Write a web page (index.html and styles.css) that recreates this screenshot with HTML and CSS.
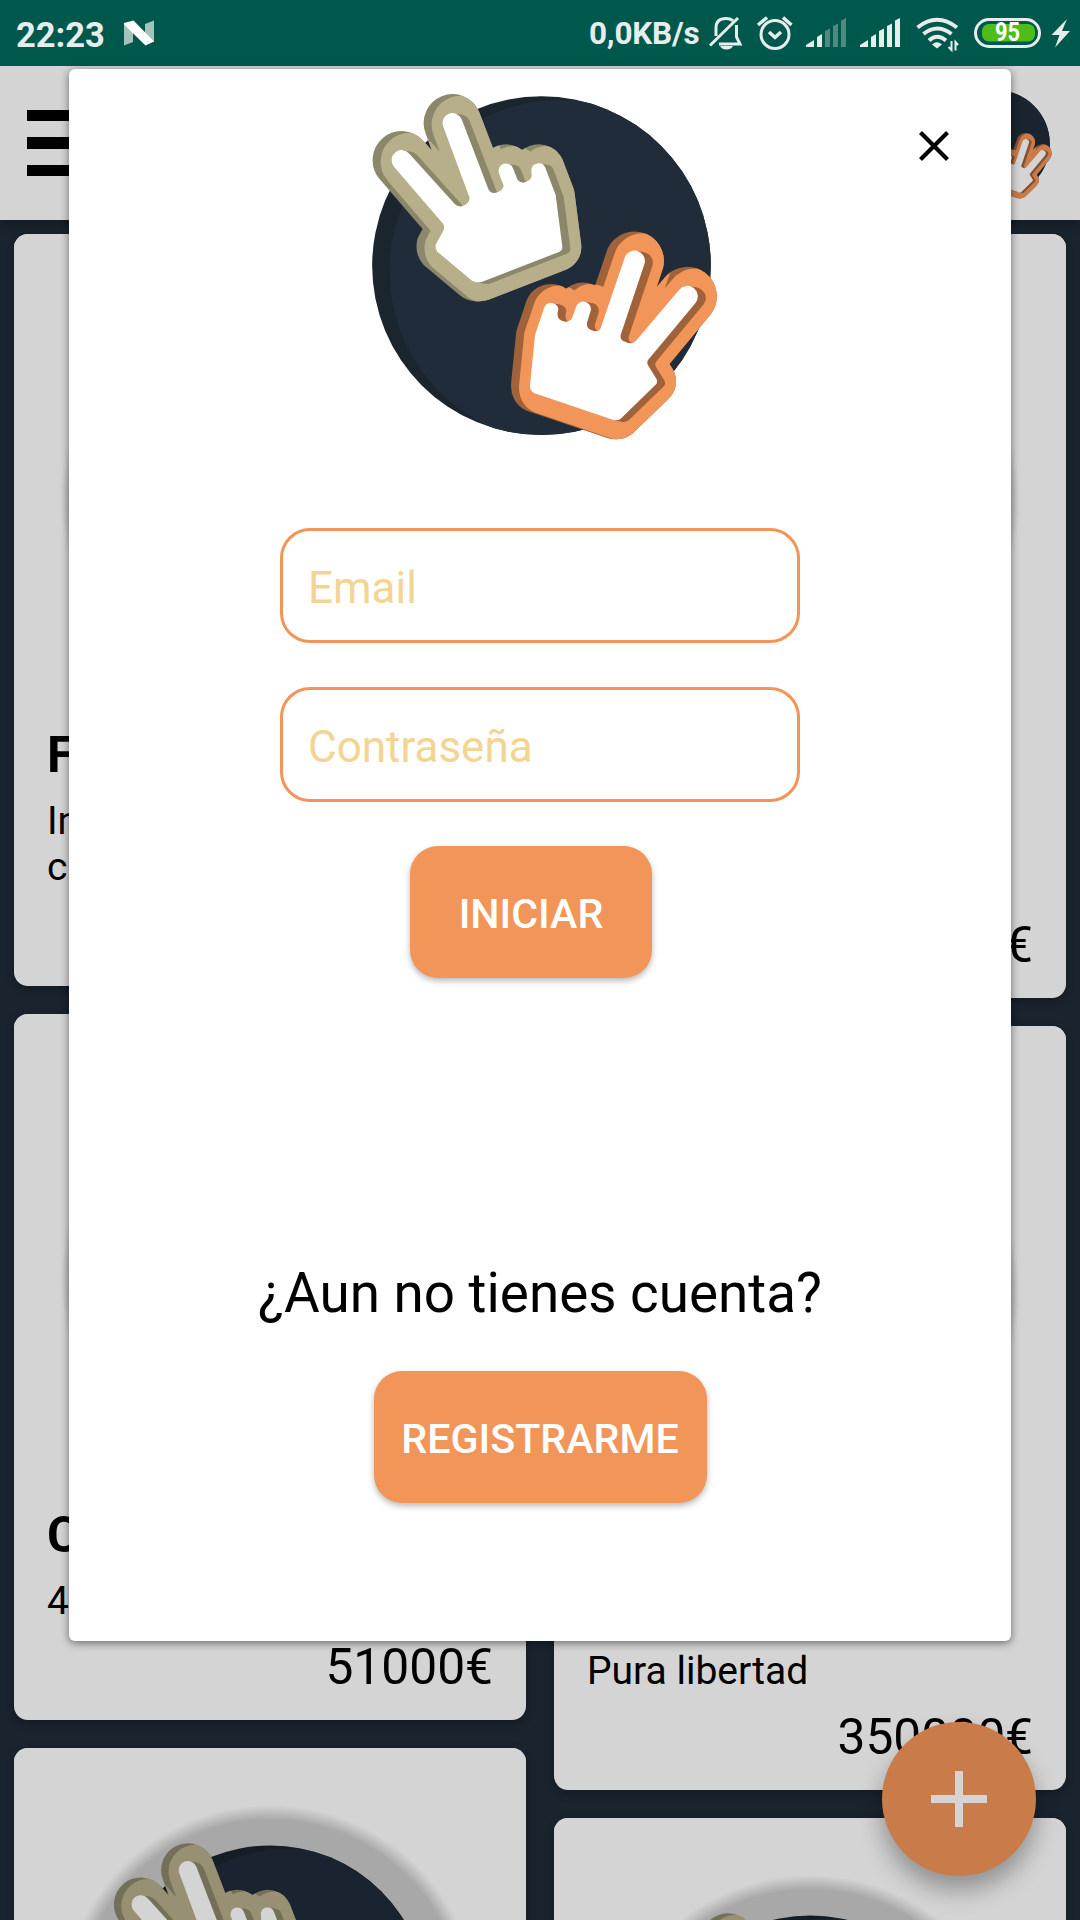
FILE: index.html
```html
<!DOCTYPE html>
<html lang="es">
<head>
<meta charset="utf-8">
<title>Iniciar sesión</title>
<link rel="stylesheet" href="styles.css">
</head>
<body>
<svg class="defs" width="0" height="0" aria-hidden="true">
  <defs>
    <path id="handA" d="M132 290A20 20 0 0 1 178 251L315 403Q323 411 335 409Q358 402 359 384L280 170A20 20 0 0 1 335 148L415 357Q421 370 434 369Q458 364 461 348L447 310A22 22 0 0 1 489 295L502 328Q508 338 520 338Q546 332 545 315L544 301A22 22 0 0 1 586 293L617 375L637 530Q638 540 627 546L395 636Q380 640 366 632L262 545Q255 537 257 524L281 480Q285 468 278 460Z"/>
    <path id="handB" d="M540 945L555 795L583 712A22 22 0 0 1 625 718Q619 740 628 748Q638 756 650 755Q664 752 667 742L678 712A22 22 0 0 1 722 722L711 758Q708 775 725 781Q745 789 752 775L823 566A31 31 0 0 1 884 580L812 795Q810 810 822 814Q845 827 858 812L987 660A30 30 0 0 1 1037 698L896 868Q889 876 894 886L920 928Q924 938 916 945L812 1046Q803 1053 790 1050L553 970Q539 964 540 945Z"/>
    <mask id="rimA" maskUnits="userSpaceOnUse" x="0" y="0" width="1170" height="1170"><use href="#handA" fill="#fff" stroke="#fff" stroke-width="114" stroke-linejoin="round"/></mask>
    <mask id="rimB" maskUnits="userSpaceOnUse" x="0" y="0" width="1170" height="1170"><use href="#handB" fill="#fff" stroke="#fff" stroke-width="114" stroke-linejoin="round"/></mask>
    <clipPath id="disc"><circle cx="574.5" cy="587" r="508"/></clipPath>
    <symbol id="logo" viewBox="0 0 1170 1170">
      <circle cx="574.5" cy="587" r="508" fill="#1a252d"/>
      <circle cx="631" cy="603" r="513" fill="#202c3a" clip-path="url(#disc)"/>
      <use href="#handA" fill="#8c866a" stroke="#8c866a" stroke-width="114" stroke-linejoin="round"/>
      <g mask="url(#rimA)"><use href="#handA" x="24" y="5" fill="#b7ae8a" stroke="#b7ae8a" stroke-width="114" stroke-linejoin="round"/></g>
      <g fill="#8c866a"><use href="#handA" x="8" y="2"/><use href="#handA" x="16" y="3"/><use href="#handA" x="24" y="5"/></g>
      <use href="#handA" fill="#fff"/>
      <use href="#handB" fill="#a0623a" stroke="#a0623a" stroke-width="114" stroke-linejoin="round"/>
      <g mask="url(#rimB)"><use href="#handB" x="24" y="5" fill="#f29558" stroke="#f29558" stroke-width="114" stroke-linejoin="round"/></g>
      <g fill="#a0623a"><use href="#handB" x="8" y="2"/><use href="#handB" x="16" y="3"/><use href="#handB" x="24" y="5"/></g>
      <use href="#handB" fill="#fff"/>
    </symbol>
  </defs>
</svg>

<div class="screen">
  <header class="status">
    <span class="clock">22:23</span>
    <svg class="nougat" width="30" height="26" viewBox="0 0 30 26"><path d="M0 3L9 7V22L0 25.500zM21 4L30 .5V22L21 17z" fill="#a3c4bd"/><path d="M0 3L9.500 .5L30 21.500L21.500 25.500L0 4.500z" fill="#fff"/></svg>
    <span class="rate">0,0KB/s</span>
    <svg class="indicators" width="370" height="66" viewBox="700 0 370 66" fill="none" stroke="#e5eeed" stroke-width="3">
      <path d="M710 45.500L738 18M716 36V28Q716 18.500 726 18.500Q730 18.500 733 20.500M736.500 25V37L740 44H719"/>
      <path d="M720 46H733Q731 49.500 726.500 49.500Q722 49.500 720 46z" fill="#e5eeed" stroke="none"/>
      <circle cx="775" cy="34.500" r="14"/><path d="M769 32L775 37.500L781 32M758 25L767 17.500M791.500 25L783 17.500" stroke-width="3.500"/>
      <g fill="#e5eeed" stroke="none"><path d="M806 47V45L814 40V47zM817 47V37L822 34V47z"/><path fill="#4f897f" d="M825 47V31L830 28.500V47zM833 47V26L838 23.500V47zM841 47V20.500L846 18V47z"/>
      <path d="M860 47V45L868 40V47zM871 47V37L876 34V47zM879 47V31L884 28.500V47zM887 47V26L892 23.500V47zM895 47V20.500L900 18V47z"/></g>
      <path d="M917.500 27.500Q937 12 957 27.500M923.500 34Q937 23 951.500 34M929 40.500Q937 33 946 40.500" stroke-width="4"/><path d="M932 44.500Q937 40 942 44.500L937 48.500z" fill="#e5eeed" stroke="none"/>
      <path d="M951.500 41V50L948.500 47M955.500 50.500V42L958 45" stroke-width="2"/>
      <rect x="975.500" y="19.500" width="64" height="27" rx="13.500"/><rect x="982" y="24" width="53" height="17.500" rx="7" fill="#4ebd1c" stroke="none"/>
      <path d="M1067 19L1051.500 35H1059.500L1055 47.500L1070 31H1062z" fill="#e5eeed" stroke="none"/>
      <text class="charge" x="995" y="41" textLength="25" lengthAdjust="spacingAndGlyphs">95</text>
    </svg>
  </header>

  <main class="app">
    <div class="appbar">
      <div class="burger"><i></i><i></i><i></i></div>
      <svg class="appbar-logo" viewBox="0 0 1170 1170"><use href="#logo"/></svg>
    </div>
    <div class="feed">
      <div class="column">
        <article class="card card-a"><div class="picture"><svg viewBox="0 0 1170 1170"><use href="#logo"/></svg></div><h2>F</h2><p>In<br>c</p></article>
        <article class="card card-b"><div class="picture"><svg viewBox="0 0 1170 1170"><use href="#logo"/></svg></div><h2>C</h2><p>4</p><b class="price">51000€</b></article>
        <article class="card card-c"><div class="picture"><svg viewBox="0 0 1170 1170"><use href="#logo"/></svg></div></article>
      </div>
      <div class="column">
        <article class="card card-d"><div class="picture"><svg viewBox="0 0 1170 1170"><use href="#logo"/></svg></div><b class="price">€</b></article>
        <article class="card card-d"><div class="picture"><svg viewBox="0 0 1170 1170"><use href="#logo"/></svg></div><p class="end">Pura libertad</p><b class="price">350000€</b></article>
        <article class="card card-c"><div class="picture"><svg viewBox="0 0 1170 1170"><use href="#logo"/></svg></div></article>
      </div>
    </div>
    <div class="fab"><svg width="56" height="56" viewBox="0 0 56 56"><path d="M28 0V56M0 28H56" stroke="#fff" stroke-width="8"/></svg></div>
    <div class="scrim"></div>
  </main>

  <section class="dialog">
    <svg class="dialog-logo" viewBox="0 0 1170 1170"><use href="#logo"/></svg>
    <svg class="close" width="30" height="30" viewBox="0 0 30 30"><path d="M1.500 1.500L28.500 28.500M28.500 1.500L1.500 28.500" stroke="#000" stroke-width="4.200"/></svg>
    <div class="field">Email</div>
    <div class="field">Contraseña</div>
    <div class="button login">INICIAR</div>
    <div class="question">¿Aun no tienes cuenta?</div>
    <div class="button register">REGISTRARME</div>
  </section>
</div>
</body>
</html>
```
FILE: styles.css
```css
* { box-sizing: border-box; }
body { margin: 0; font-family: Roboto, "Liberation Sans", sans-serif; }
svg { display: block; flex: none; }
.defs { position: absolute; }
.screen { position: relative; width: 1080px; height: 1920px; overflow: hidden; display: flex; flex-direction: column; }

/* Status bar */
.status { height: 66px; flex: none; background: #00574b; color: #e5eeed; display: flex; align-items: center; padding-left: 16px; font-weight: 700; }
.clock { width: 108px; font-size: 34.5px; line-height: 44px; padding-top: 3px; }
.rate { margin-left: 435px; width: 111px; font-size: 31.5px; line-height: 44px; padding-top: 2px; letter-spacing: -.2px; white-space: nowrap; }
.charge { font-size: 25px; font-weight: 700; fill: #fff; stroke: none; }

/* Catalogue */
.app { position: relative; height: 1854px; overflow: hidden; background: #202c39; }
.appbar { height: 154px; background: #fff; padding: 0 21px 0 27px; display: flex; justify-content: space-between; align-items: center; box-shadow: 0 4px 10px rgba(0,0,0,.3); }
.burger { width: 66px; display: grid; gap: 16px; }
.burger i { height: 11.500px; background: #000; }
.appbar-logo { width: 123px; height: 123px; }
.feed { display: grid; grid-template-columns: 512px 512px; gap: 28px; padding: 14px; }
.column { display: flex; flex-direction: column; gap: 28px; }
.card { background: #fff; border-radius: 14px; overflow: hidden; padding: 0 33px 18px; display: flex; flex-direction: column; box-shadow: 0 3px 8px rgba(0,0,0,.3); }
.card-a { height: 752px; }
.card-b { height: 706px; }
.card-c { height: 706px; }
.card-d { height: 764px; }
.picture { height: 490px; flex: none; margin: 0 -33px; padding: 73px 0 0 79px; background: radial-gradient(circle at 256px 266px, #cacaca 194px, #fff 209px); }
.picture svg { width: 361px; height: 361px; }
.card h2 { margin: 0; font-size: 50px; line-height: 62px; }
.card p { margin: 12px 0 0; font-size: 39px; line-height: 46px; }
.card p.end { margin-top: 132px; }
.price { margin-top: auto; margin-bottom: 5px; align-self: flex-end; font-size: 49.7px; line-height: 59px; font-weight: 400; }
.fab { position: absolute; left: 882px; top: 1656px; width: 154px; height: 154px; border-radius: 50%; background: #f29558; display: grid; place-items: center; box-shadow: 0 14px 24px rgba(0,0,0,.32); }
.scrim { position: absolute; inset: 0; background: rgba(0,0,0,.169); }

/* Login dialog */
.dialog { position: absolute; left: 69px; top: 69px; width: 942px; height: 1572px; border-radius: 6px; background: #fff; box-shadow: 0 2px 9px rgba(0,0,0,.5); display: flex; flex-direction: column; align-items: center; }
.dialog-logo { width: 390px; height: 390px; margin: 1px 0 68px 10px; }
.close { position: absolute; left: 850px; top: 62px; }
.field { width: 520px; height: 115px; flex: none; margin-bottom: 44px; border: 3px solid #f29558; border-radius: 30px; padding-left: 25px; font-size: 44px; line-height: 114px; color: #f2d592; }
.button { height: 132px; flex: none; border-radius: 28px; background: #f29558; color: #fff; font-size: 41.2px; font-weight: 500; line-height: 136px; text-align: center; box-shadow: 0 3px 6px rgba(0,0,0,.28); }
.login { width: 242px; margin-right: 18px; }
.question { margin: 282px 0 44px; font-size: 54.8px; line-height: 67px; white-space: nowrap; }
.register { width: 333px; }
```
